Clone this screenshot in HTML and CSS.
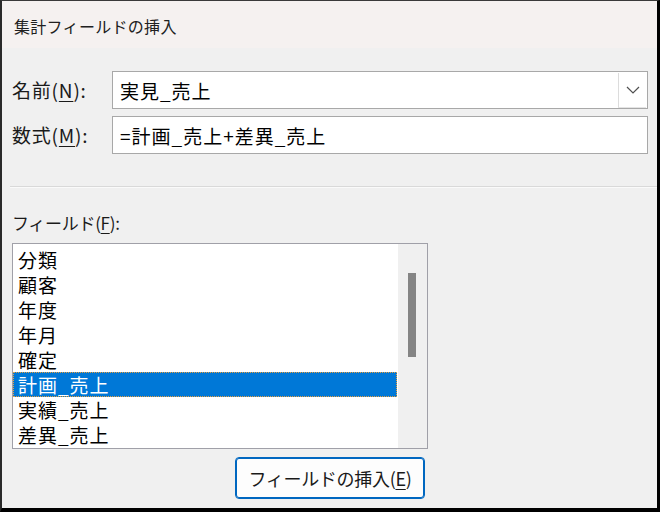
FILE: index.html
```html
<!DOCTYPE html>
<html lang="ja">
<head>
<meta charset="utf-8">
<link rel="stylesheet" href="styles.css">
</head>
<body>
<div class="dialog">
  <div class="titlebar">集計フィールドの挿入</div>
  <div class="content">
    <div class="row row-name">
      <label class="lbl">名前(<u>N</u>):</label>
      <div class="field combo">
        <span class="val">実見_売上</span>
        <span class="drop">
          <svg width="14" height="8" viewBox="0 0 14 8"><path d="M1 1 L7 7 L13 1" fill="none" stroke="#505050" stroke-width="1.2"/></svg>
        </span>
      </div>
    </div>
    <div class="row row-formula">
      <label class="lbl">数式(<u>M</u>):</label>
      <div class="field"><span class="val">=計画_売上+差異_売上</span></div>
    </div>
    <div class="sep"></div>
    <div class="lbl fields-lbl">フィールド(<u>F</u>):</div>
    <div class="listbox">
      <ul class="items">
        <li>分類</li>
        <li>顧客</li>
        <li>年度</li>
        <li>年月</li>
        <li>確定</li>
        <li class="sel">計画_売上</li>
        <li>実績_売上</li>
        <li>差異_売上</li>
      </ul>
      <div class="scroll"><div class="thumb"></div></div>
    </div>
    <div class="btnrow"><button class="btn">フィールドの挿入(<u>E</u>)</button></div>
  </div>
</div>
</body>
</html>
```
FILE: styles.css
```css
* { box-sizing: border-box; }
html, body { margin: 0; padding: 0; }
body {
  font-family: "Noto Sans CJK JP", "Noto Sans", sans-serif;
  color: #1a1a1a;
  background: #f0f0f0;
}
.dialog {
  width: 660px;
  height: 512px;
  border-top: 1px solid #3a3a3a;
  border-left: 2px solid #2a2a2a;
  border-right: 3px solid #000;
  border-bottom: 4px solid #000;
  background: #f0f0f0;
  display: flex;
  flex-direction: column;
}
.titlebar {
  height: 47px;
  background: #f5f1f0;
  font-size: 16px;
  padding-left: 12px;
  padding-top: 4px;
  line-height: 43px;
  color: #202020;
  letter-spacing: 0.3px;
}
.content {
  flex: 1;
  padding-left: 10px;
  display: flex;
  flex-direction: column;
}
.row {
  display: flex;
  align-items: center;
  height: 38px;
}
.row-name { margin-top: 23px; }
.row-formula { margin-top: 7px; }
.lbl {
  width: 100px;
  font-size: 19px;
  line-height: 20px;
  letter-spacing: 0.8px;
  color: #1a1a1a;
}
.lbl u { text-decoration-thickness: 1px; text-underline-offset: 3px; }
.field {
  width: 536px;
  height: 38px;
  background: #fff;
  border: 1px solid #a8a8a8;
  display: flex;
  align-items: center;
  padding-left: 7px;
  font-size: 19px;
  letter-spacing: 1px;
  color: #000;
}
.val { flex: 1; }
.combo { padding-right: 1px; }
.drop {
  width: 28px;
  height: 35px;
  border-left: 1px solid #dcdcdc;
  border-bottom: 1px solid #e4e4e4;
  background: #fff;
  display: flex;
  align-items: center;
  justify-content: center;
}
.sep {
  margin-top: 32px;
  margin-left: -2px;
  height: 2px;
  border-top: 1px solid #d9d9d9;
  border-bottom: 1px solid #fafafa;
}
.fields-lbl {
  width: auto;
  margin-top: 25px;
  font-size: 17px;
  letter-spacing: -0.3px;
}
.listbox {
  margin-top: 10px;
  width: 416px;
  height: 206px;
  background: #fff;
  border: 1px solid #a0a0a8;
  display: flex;
}
.items {
  list-style: none;
  margin: 0;
  padding: 3px 0 0 0;
  width: 385px;
}
.items li {
  height: 25px;
  line-height: 25px;
  font-size: 19px;
  letter-spacing: 1px;
  padding-left: 5px;
  color: #000;
  width: 384px;
}
.items li.sel {
  background: #0078d7;
  color: #fff;
  outline: 1px dotted #e8a040;
  outline-offset: -1px;
}
.scroll {
  width: 29px;
  background: #f0f0f0;
  position: relative;
}
.thumb {
  position: absolute;
  left: 10px;
  top: 29px;
  width: 8px;
  height: 84px;
  background: #858585;
}
.btnrow {
  margin-top: 8px;
  padding-left: 223px;
}
.btn {
  width: 190px;
  height: 42px;
  background: #fdfdfd;
  border: 1px solid #0067c0;
  box-shadow: inset 0 0 0 1px #0067c0;
  border-radius: 4px;
  font-family: "Noto Sans CJK JP", "Noto Sans", sans-serif;
  font-size: 18px;
  letter-spacing: -0.3px;
  color: #1a1a1a;
  padding: 0;
}
.btn u { text-underline-offset: 3px; }
```
